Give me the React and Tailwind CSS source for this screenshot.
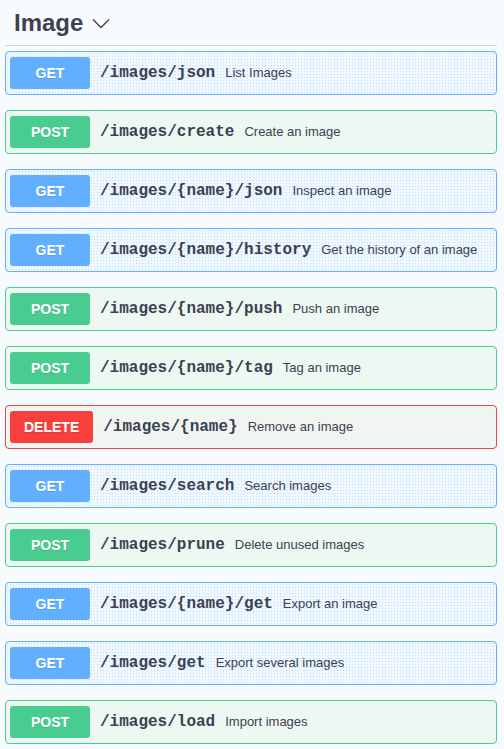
import React from "react";

// Swagger-style tag section: "Image" endpoints list

const METHODS = {
  GET: {
    row: "border-[#61affe] bg-[#f1f7fe] bg-[radial-gradient(circle,#b2e2fb_0.75px,transparent_0.9px)] bg-[length:3px_3px]",
    badge: "bg-[#61affe]",
  },
  POST: { row: "border-[#49cc90] bg-[#eef8f2]", badge: "bg-[#49cc90]" },
  DELETE: { row: "border-[#f93e3e] bg-[#eff6f1]", badge: "bg-[#f93e3e]" },
};

const ENDPOINTS = [
  { method: "GET", path: "/images/json", desc: "List Images" },
  { method: "POST", path: "/images/create", desc: "Create an image" },
  { method: "GET", path: "/images/{name}/json", desc: "Inspect an image" },
  { method: "GET", path: "/images/{name}/history", desc: "Get the history of an image" },
  { method: "POST", path: "/images/{name}/push", desc: "Push an image" },
  { method: "POST", path: "/images/{name}/tag", desc: "Tag an image" },
  { method: "DELETE", path: "/images/{name}", desc: "Remove an image" },
  { method: "GET", path: "/images/search", desc: "Search images" },
  { method: "POST", path: "/images/prune", desc: "Delete unused images" },
  { method: "GET", path: "/images/{name}/get", desc: "Export an image" },
  { method: "GET", path: "/images/get", desc: "Export several images" },
  { method: "POST", path: "/images/load", desc: "Import images" },
];

function Chevron() {
  return (
    <svg width="20" height="20" viewBox="0 0 20 20" className="ml-[8px] text-[#3b4151]">
      <path d="M2 6.5 L10 14.5 L18 6.5" fill="none" stroke="currentColor" strokeWidth="1.3" />
    </svg>
  );
}

function Operation({ method, path, desc }) {
  const m = METHODS[method];
  return (
    <div className={`mb-[15px] flex items-center rounded-[4px] border px-[4px] py-[5px] ${m.row}`}>
      <span
        className={`min-w-[80px] rounded-[3px] px-[14px] py-[6px] text-center font-['Liberation_Sans',Arial,sans-serif] text-[14px] font-bold leading-[20px] text-white [text-shadow:0_1px_0_rgba(0,0,0,0.1)] ${m.badge}`}
      >
        {method}
      </span>
      <span className="px-[10px] font-['Liberation_Mono','Courier_New',monospace] text-[16px] font-bold text-[#3b4151]">
        {path}
      </span>
      <span className="font-['Liberation_Sans',Arial,sans-serif] text-[13px] text-[#3b4151]">
        {desc}
      </span>
    </div>
  );
}

export default function App() {
  return (
    <div className="min-h-screen bg-[#f8fbfe] pl-[5px] pr-[7px]">
      <h3 className="mb-[5px] flex items-center border-b border-[#d2d6d8] py-[10px] pl-[9px] font-['Liberation_Sans',Arial,sans-serif] text-[24px] font-bold leading-[25px] text-[#3b4151]">
        Image
        <Chevron />
      </h3>
      {ENDPOINTS.map((e) => (
        <Operation key={e.path + e.method} {...e} />
      ))}
    </div>
  );
}
